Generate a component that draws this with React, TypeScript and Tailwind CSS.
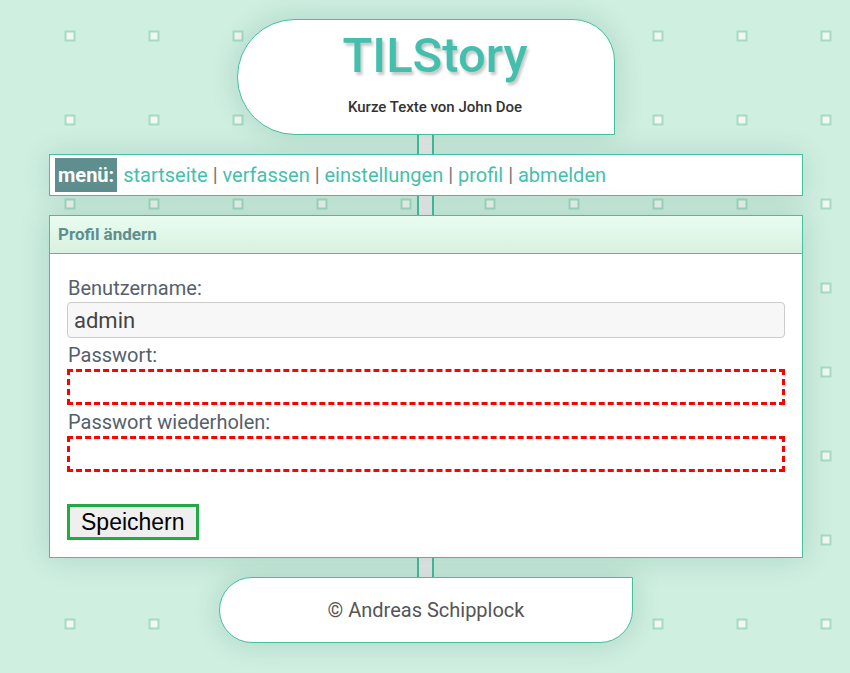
export default function App() {
  const links = ["startseite", "verfassen", "einstellungen", "profil", "abmelden"];

  return (
    <div className="relative min-h-screen overflow-hidden bg-[#cfefe1] font-['Roboto',sans-serif]">
      {/* dotted square pattern in the background */}
      <svg className="absolute inset-0 h-full w-full" aria-hidden="true">
        <defs>
          <pattern id="dots" width="84" height="84" patternUnits="userSpaceOnUse">
            <rect x="65.5" y="31.5" width="9" height="9" fill="#f3f6f4" stroke="#a3dcc3" strokeWidth="2" />
          </pattern>
        </defs>
        <rect width="100%" height="100%" fill="url(#dots)" />
      </svg>

      <div className="relative ml-[49px] flex w-[754px] flex-col items-center gap-[19px] pt-[19px] pb-[30px]">
        {/* the pipe behind the cards */}
        <div className="absolute left-[368px] top-[120px] h-[470px] w-[17px] border-x-2 border-[#45bf9f] bg-[#ececec]"></div>

        <header className="relative flex h-[116px] w-[378px] flex-col items-center rounded-[58px_42px_0_58px] border border-[#45bf9f] bg-white pl-[18px] pt-[12px] shadow-[0_0_28px_rgba(0,90,60,0.18)]">
          <h1 className="text-[49px] font-medium leading-[48px] text-[#45bfad] [text-shadow:2px_3px_3px_rgba(0,0,0,0.22)]">
            TILStory
          </h1>
          <p className="mt-[17px] text-[15px] font-medium leading-[20px] text-[#333]">Kurze Texte von John Doe</p>
        </header>

        <nav className="relative flex h-[42px] w-full items-center border border-[#45bf9f] bg-white px-[5px] text-[20px] shadow-[0_0_28px_rgba(0,90,60,0.15)]">
          <span className="flex h-[34px] items-center bg-[#5f8e8e] px-[3px] font-bold text-white">menü:</span>
          <span className="ml-[6px] text-[#45bfad]">
            {links.map((l, i) => (
              <span key={l}>
                {i > 0 && <span className="text-[#777]"> | </span>}
                <a href="#" className="text-[#45bfad]">{l}</a>
              </span>
            ))}
          </span>
        </nav>

        <section className="relative w-full border border-[#45bf9f] bg-white shadow-[0_0_28px_rgba(0,90,60,0.18)]">
          <div className="flex h-[38px] items-center border-b border-[#45bf9f] bg-gradient-to-b from-[#e8fdf0] to-[#d9f1e1] pl-[8px] text-[17px] font-bold text-[#5f8e8e]">
            Profil ändern
          </div>
          <div className="px-[17px] pt-[17px] pb-[17px]">
            <label className="mt-[5px] block pl-[1px] text-[20px] leading-[24px] text-[#55606c]">Benutzername:</label>
            <input
              readOnly
              value="admin"
              className="mt-[2px] block h-[36px] w-full rounded-[4px] border border-[#ccc] bg-[#f7f7f7] px-[6px] text-[22px] text-[#444] outline-none"
            />
            <label className="mt-[5px] block pl-[1px] text-[20px] leading-[24px] text-[#55606c]">Passwort:</label>
            <input type="password" className="mt-[2px] block h-[36px] w-full border-[3px] border-dashed border-[#ff0000] bg-white outline-none" />
            <label className="mt-[5px] block pl-[1px] text-[20px] leading-[24px] text-[#55606c]">Passwort wiederholen:</label>
            <input type="password" className="mt-[2px] block h-[36px] w-full border-[3px] border-dashed border-[#ff0000] bg-white outline-none" />
            <button className="mt-[32px] h-[36px] border-[3px] border-[#22aa44] bg-[#efefef] px-[11px] font-['Liberation_Sans',Arial,sans-serif] text-[23px] leading-none text-black">
              Speichern
            </button>
          </div>
        </section>

        <footer className="relative flex h-[66px] w-[414px] items-center justify-center rounded-[33px_0_33px_33px] border border-[#45bf9f] bg-white text-[20px] text-[#555] shadow-[0_0_28px_rgba(0,90,60,0.18)]">
          © Andreas Schipplock
        </footer>
      </div>
    </div>
  );
}
